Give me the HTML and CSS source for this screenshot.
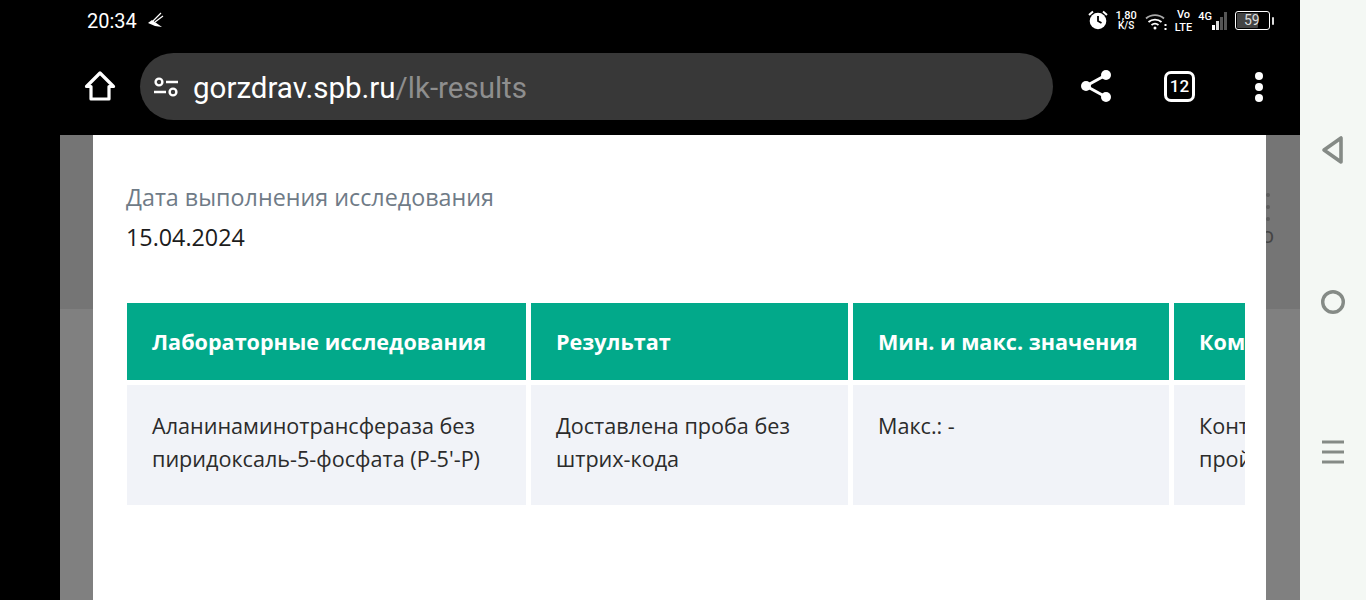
FILE: index.html
```html
<!DOCTYPE html>
<html lang="en">
<head>
    <meta charset="UTF-8">
    <meta name="viewport" content="width=device-width, initial-scale=1.0">
    <title>gorzdrav.spb.ru/lk-results</title>
    <link rel="stylesheet" href="styles.css">
</head>
<body>
    <div class="phone">
        <div class="screen">
            <!-- Status bar -->
            <div class="status-bar">
                <div class="status-left">
                    <span class="clock">20:34</span>
                    <svg class="sweep" width="18" height="18" viewBox="0 0 18 18" fill="none" stroke="#fff" stroke-width="1.2">
                        <path d="M14 1 6 9M16 4 8 10"/>
                        <path d="M1 11 5 8l10 7-7-1z" fill="#fff" stroke="none"/>
                    </svg>
                </div>
                <div class="status-right">
                    <svg class="alarm" width="20" height="20" viewBox="0 0 20 20">
                        <circle cx="10" cy="11" r="8.300" fill="#fff"/>
                        <path d="M10 6v5l3.500 2" fill="none" stroke="#000" stroke-width="1.800"/>
                        <path d="M1 5 5 1.500M19 5l-4-3.500" stroke="#fff" stroke-width="2"/>
                    </svg>
                    <span class="stack speed"><b>1,80</b><b>K/S</b></span>
                    <svg class="wifi" width="22" height="18" viewBox="0 0 22 18" fill="none" stroke="#fff" stroke-width="1.800">
                        <path d="M1 5.500C6 1 14 1 19 5.500" stroke="#aaa"/>
                        <path d="M3.500 9C7 5.800 13 5.800 16.500 9"/>
                        <path d="M6.500 12C8.500 10.500 11.500 10.500 13.500 12"/>
                        <circle cx="10" cy="15" r="1.500" fill="#fff" stroke="none"/>
                        <path d="M20.500 11v2M20.500 15v2" stroke-width="2"/>
                    </svg>
                    <span class="stack volte"><b>Vo</b><b>LTE</b></span>
                    <span class="signal">
                        <span class="net">4G</span>
                        <span class="bars">
                            <i class="bar b1"></i>
                            <i class="bar b2"></i>
                            <i class="bar b3"></i>
                            <i class="bar b4"></i>
                        </span>
                    </span>
                    <span class="battery"><span class="battery-level">59</span></span>
                    <i class="battery-tip"></i>
                </div>
            </div>

            <!-- Browser toolbar -->
            <div class="toolbar">
                <svg class="home-icon" width="32" height="32" viewBox="0 0 32 32" fill="none" stroke="#fff" stroke-width="3.200" stroke-linejoin="round">
                    <path d="M2.500 16.500 16 3l13.500 13.500H25V29H7V16.500z"/>
                </svg>
                <div class="address">
                    <svg class="tune-icon" width="26" height="22" viewBox="0 0 26 22" fill="none" stroke="#fff" stroke-width="2.400">
                        <circle cx="6" cy="6" r="3.400"/>
                        <path d="M13 6h12M1 16h12"/>
                        <circle cx="20" cy="16" r="3.400"/>
                    </svg>
                    <span class="url"><span class="host">gorzdrav.spb.ru</span><span class="path">/lk-results</span></span>
                </div>
                <svg class="share-icon" width="34" height="36" viewBox="0 0 34 36" fill="#fff" stroke="#fff">
                    <path d="M27 7 7 18l20 11" fill="none" stroke-width="3"/>
                    <circle cx="27" cy="7" r="5" stroke="none"/>
                    <circle cx="7" cy="18" r="5" stroke="none"/>
                    <circle cx="27" cy="29" r="5" stroke="none"/>
                </svg>
                <div class="tabs-count">12</div>
                <div class="menu-dots"><i></i><i></i><i></i></div>
            </div>

            <!-- Page under the modal -->
            <div class="page">
                <div class="page-ghost"><i></i><i></i><i></i><span>о</span></div>
                <div class="modal">
                    <div class="field-label">Дата выполнения исследования</div>
                    <div class="field-value">15.04.2024</div>
                    <div class="table-wrap">
                        <table class="results">
                            <thead>
                                <tr>
                                    <th class="col-1">Лабораторные исследования</th>
                                    <th class="col-2">Результат</th>
                                    <th class="col-3">Мин. и макс. значения</th>
                                    <th class="col-4">Комментарий</th>
                                </tr>
                            </thead>
                            <tbody>
                                <tr>
                                    <td>Аланинаминотрансфераза без<br>пиридоксаль-5-фосфата (P-5'-P)</td>
                                    <td>Доставлена проба без<br>штрих-кода</td>
                                    <td>Макс.: -</td>
                                    <td>Контроль<br>пройден</td>
                                </tr>
                            </tbody>
                        </table>
                    </div>
                </div>
            </div>
        </div>

        <!-- Android navigation -->
        <div class="nav-bar">
            <svg width="24" height="30" viewBox="0 0 24 30" fill="none" stroke="#858b86" stroke-width="3.600" stroke-linejoin="round">
                <path d="M20 3v24L3 15z"/>
            </svg>
            <svg width="26" height="26" viewBox="0 0 26 26" fill="none" stroke="#858b86" stroke-width="3.400">
                <circle cx="13" cy="13" r="10.300"/>
            </svg>
            <svg width="24" height="26" viewBox="0 0 24 26" fill="none" stroke="#858b86" stroke-width="3">
                <path d="M1 3h22M1 13h22M1 23h22"/>
            </svg>
        </div>
    </div>
</body>
</html>
```

FILE: styles.css
```css
* {
    margin: 0;
    padding: 0;
    box-sizing: border-box;
}

html, body {
    width: 1366px;
    height: 600px;
    overflow: hidden;
    background: #000;
}

.phone {
    display: flex;
    height: 600px;
}

.screen {
    width: 1300px;
    display: flex;
    flex-direction: column;
    background: #000;
}

.nav-bar {
    width: 66px;
    background: #f4f8f4;
    display: flex;
    flex-direction: column;
    align-items: center;
    gap: 124px;
    padding: 135px 0 0 0;
}

/* status bar */
.status-bar {
    height: 40px;
    display: flex;
    justify-content: space-between;
    align-items: center;
    padding: 1px 26px 0 87px;
    color: #fff;
    font-family: Roboto, sans-serif;
}

.status-left, .status-right {
    display: flex;
    align-items: center;
}

.clock {
    font-size: 20px;
    margin-right: 10px;
}

.alarm {
    margin-bottom: 1px;
}

.stack {
    display: flex;
    flex-direction: column;
    align-items: center;
    font-size: 10px;
    line-height: 10px;
}

.stack b {
    font-weight: 500;
}

.speed {
    margin: 0 8px 0 8px;
}

.speed b:first-child {
    font-size: 11px;
}

.volte {
    margin: 0 6px 0 8px;
    font-size: 11px;
    line-height: 13px;
}

.wifi {
    margin-top: 2px;
}

.signal {
    display: flex;
    align-items: flex-start;
    height: 20px;
    margin-right: 8px;
}

.net {
    font-size: 11px;
    font-weight: 500;
    line-height: 12px;
}

.bars {
    display: flex;
    align-items: flex-end;
    gap: 1px;
    height: 18px;
    margin: 1px 0 0 0;
}

.bar {
    display: block;
    width: 3px;
    background: #555;
}

.b1 { height: 5px; background: #fff; }
.b2 { height: 9px; background: #ddd; }
.b3 { height: 13px; }
.b4 { height: 18px; }

.battery {
    width: 35px;
    height: 19px;
    border: 1px solid #fff;
    border-radius: 3px;
    padding: 1px;
    display: flex;
}

.battery-level {
    width: 21px;
    background: #444;
    border-radius: 1px;
    font-size: 14px;
    line-height: 15px;
    color: #ddd;
    white-space: nowrap;
    padding-left: 7px;
}

.battery-tip {
    width: 2px;
    height: 8px;
    background: #ddd;
    margin-left: 2px;
    border-radius: 1px;
}

/* toolbar */
.toolbar {
    height: 95px;
    display: flex;
    align-items: flex-start;
    padding: 13px 0 0 84px;
    font-family: Roboto, sans-serif;
}

.home-icon {
    margin-top: 17px;
}

.address {
    width: 913px;
    height: 67px;
    margin-left: 24px;
    background: #383838;
    border-radius: 34px;
    display: flex;
    align-items: center;
    padding-left: 13px;
}

.tune-icon {
    margin-right: 14px;
}

.url {
    font-size: 29.5px;
    margin-top: 2px;
}

.host {
    color: #fff;
}

.path {
    color: #8e8e8e;
}

.share-icon {
    margin: 15px 0 0 26px;
}

.tabs-count {
    width: 31px;
    height: 31px;
    margin: 18px 0 0 51px;
    border: 3px solid #fff;
    border-radius: 7px;
    color: #fff;
    font-size: 17px;
    font-weight: 500;
    line-height: 25px;
    text-align: center;
}

.menu-dots {
    display: flex;
    flex-direction: column;
    gap: 3px;
    margin: 19px 0 0 60px;
}

.menu-dots i {
    display: block;
    width: 8px;
    height: 8px;
    border-radius: 50%;
    background: #fff;
}

/* page */
.page {
    position: relative;
    flex: 1;
    margin-left: 60px;
    padding: 0 34px 0 33px;
    background: linear-gradient(#757575 174px, #808080 174px);
}

.page-ghost {
    position: absolute;
    top: 58px;
    left: 1205px;
    display: flex;
    flex-direction: column;
    gap: 8px;
    font-family: "Open Sans", sans-serif;
    font-size: 22px;
    line-height: 22px;
    color: #444;
}

.page-ghost i {
    display: block;
    width: 4px;
    height: 4px;
    margin-left: 1px;
    border-radius: 50%;
    background: #5c5c5c;
}

.page-ghost span {
    margin-top: -6px;
    margin-left: -4px;
}

.modal {
    position: relative;
    height: 465px;
    background: #fff;
    padding: 46px 21px 0 33px;
    font-family: "Open Sans", sans-serif;
    font-size: 23.3px;
    line-height: 33px;
}

.field-label {
    color: #6f7b87;
}

.field-value {
    color: #1c1c1c;
    margin-top: 7px;
}

.table-wrap {
    margin-top: 49px;
    overflow: hidden;
}

.results {
    border-collapse: separate;
    border-spacing: 5px;
    margin: -5px 0 0 -4px;
    table-layout: fixed;
    width: 1457px;
    font-size: 21.6px;
}

.results th {
    height: 77px;
    background: #02a98a;
    color: #fff;
    font-size: 21.6px;
    font-weight: 700;
    text-align: left;
    padding: 0 25px;
    white-space: nowrap;
}

.results td {
    height: 120px;
    background: #f1f3f8;
    color: #2b2b2b;
    vertical-align: top;
    padding: 24px 25px 0 25px;
    white-space: nowrap;
}

.col-1 { width: 399px; }
.col-2 { width: 317px; }
.col-3 { width: 316px; }
.col-4 { width: 400px; }
```
